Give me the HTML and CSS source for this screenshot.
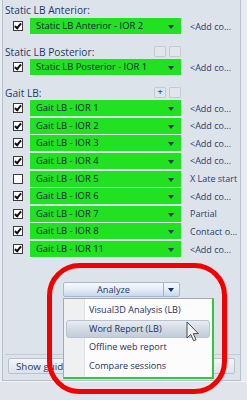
FILE: index.html
```html
<!DOCTYPE html>
<html lang="en">
<head>
  <meta charset="UTF-8">
  <meta name="viewport" content="width=device-width, initial-scale=1.0">
  <title>Session sources</title>
  <link rel="stylesheet" href="styles.css">
</head>
<body>

<div class="window">
  <div class="panel">
    <div class="group-head first"><span>Static LB Anterior:</span></div>
    <div class="row">
      <span class="check on"></span>
      <div class="combo">Static LB Anterior - IOR 2</div>
      <span class="note">&lt;Add co...</span>
    </div>

    <div class="group-head">
      <span>Static LB Posterior:</span>
      <span class="tools"><span class="tool"></span><span class="tool"></span></span>
    </div>
    <div class="row">
      <span class="check on"></span>
      <div class="combo">Static LB Posterior - IOR 1</div>
      <span class="note">&lt;Add co...</span>
    </div>

    <div class="group-head">
      <span>Gait LB:</span>
      <span class="tools"><span class="tool add">+</span><span class="tool"></span></span>
    </div>
    <div class="gait">
      <div class="row"><span class="check on"></span><div class="combo">Gait LB - IOR 1</div><span class="note">&lt;Add co...</span></div>
      <div class="row"><span class="check on"></span><div class="combo">Gait LB - IOR 2</div><span class="note">&lt;Add co...</span></div>
      <div class="row"><span class="check on"></span><div class="combo">Gait LB - IOR 3</div><span class="note">&lt;Add co...</span></div>
      <div class="row"><span class="check on"></span><div class="combo">Gait LB - IOR 4</div><span class="note">&lt;Add co...</span></div>
      <div class="row"><span class="check"></span><div class="combo">Gait LB - IOR 5</div><span class="note">X Late start</span></div>
      <div class="row"><span class="check on"></span><div class="combo">Gait LB - IOR 6</div><span class="note">&lt;Add co...</span></div>
      <div class="row"><span class="check on"></span><div class="combo">Gait LB - IOR 7</div><span class="note">Partial</span></div>
      <div class="row"><span class="check on"></span><div class="combo">Gait LB - IOR 8</div><span class="note">Contact o...</span></div>
      <div class="row"><span class="check on"></span><div class="combo">Gait LB - IOR 11</div><span class="note">&lt;Add co...</span></div>
    </div>

    <div class="analyze-wrap">
      <div class="split-btn">
        <span class="split-main">Analyze</span>
        <span class="split-arrow"></span>
      </div>
    </div>

    <div class="footer">
      <button class="guide-btn">Show guide</button>
    </div>
  </div>
  <div class="status"></div>

  <!-- dropdown of the Analyze button -->
  <ul class="menu">
    <li>Visual3D Analysis (LB)</li>
    <li class="hover">Word Report (LB)</li>
    <li>Offline web report</li>
    <li>Compare sessions</li>
  </ul>

  <svg class="cursor" width="14" height="22" viewBox="0 0 14 22">
    <path d="M1 1 L1 17 L4.8 13.4 L7.6 19.8 L10 18.8 L7.3 12.6 L12.4 12.6 Z" fill="#f4f4f4" stroke="#4a4a4a" stroke-width="1" stroke-linejoin="round"/>
  </svg>

  <svg class="mark" width="247" height="400" viewBox="0 0 247 400">
    <rect x="49.5" y="265.5" width="175" height="126" rx="30" ry="30" fill="none" stroke="#f20000" stroke-width="5"/>
  </svg>
</div>

</body>
</html>
```

FILE: styles.css
```css
body {
  margin: 0;
  background-color: #e6eaf0;
  font-family: 'Open Sans', 'DejaVu Sans', sans-serif;
}

.window {
  position: relative;
  width: 247px;
  height: 400px;
  overflow: hidden;
  background-color: #e8ecf1;
}

.panel {
  box-sizing: border-box;
  margin-left: 2px;
  width: 239px;
  height: 381px;
  padding-left: 2px;
  border: 1px solid #b7c0cc;
  border-top: none;
  background-color: #dde3eb;
  display: flex;
  flex-direction: column;
}

.group-head {
  display: flex;
  align-items: center;
  justify-content: space-between;
  width: 176px;
  height: 15px;
  padding-top: 10px;
  font-size: 10.2px;
  color: #1f3864;
}

.group-head.first {
  padding-top: 2px;
  height: 16px;
}

.tools {
  display: flex;
  gap: 3px;
}

.tool {
  box-sizing: border-box;
  width: 12px;
  height: 11px;
  border: 1px solid #c3cad2;
  border-radius: 1px;
  background-color: #e2e6eb;
  font-size: 9px;
  line-height: 8px;
  text-align: center;
  color: #2f64b4;
  font-weight: bold;
}

.row {
  display: flex;
  align-items: center;
  height: 16px;
  padding-left: 8px;
}

.gait .row {
  margin-bottom: 1.625px;
}

.check {
  box-sizing: border-box;
  width: 10px;
  height: 10px;
  margin-right: 7px;
  border: 1px solid #3b3b3b;
  background-color: #fff;
  position: relative;
}

.check.on::after {
  content: '';
  position: absolute;
  left: 2px;
  top: 0px;
  width: 2px;
  height: 5px;
  border-right: 2px solid #111;
  border-bottom: 2px solid #111;
  transform: rotate(40deg);
}

.combo {
  position: relative;
  box-sizing: border-box;
  width: 151px;
  height: 16px;
  padding-left: 6px;
  background-color: #22e022;
  font-size: 9.4px;
  line-height: 16px;
  color: #15233a;
  white-space: nowrap;
}

.combo::after {
  content: '';
  position: absolute;
  right: 7px;
  top: 7px;
  border-left: 3.5px solid transparent;
  border-right: 3.5px solid transparent;
  border-top: 4px solid #1c2c6a;
}

.note {
  margin-left: 9px;
  font-size: 9px;
  color: #2a3c6c;
  white-space: nowrap;
}

.analyze-wrap {
  margin-top: 23.4px;
  padding-left: 58px;
}

.split-btn {
  box-sizing: border-box;
  display: flex;
  width: 117px;
  height: 15px;
  border: 1px solid #a6b8d0;
  border-radius: 2px;
  background: linear-gradient(#f7fafd, #e3ecf7 50%, #c6d8ee);
}

.split-main {
  flex: 1;
  text-align: center;
  font-size: 9.2px;
  line-height: 13px;
  color: #1f3864;
}

.split-arrow {
  position: relative;
  width: 15px;
  border-left: 1px solid #9fb2cc;
}

.split-arrow::after {
  content: '';
  position: absolute;
  left: 4px;
  top: 5px;
  border-left: 3.5px solid transparent;
  border-right: 3.5px solid transparent;
  border-top: 4px solid #1c2c6a;
}

.footer {
  margin-top: auto;
  padding: 3px 5px 6px 3px;
  border-top: 1px solid #c3cbd5;
}

.guide-btn {
  box-sizing: border-box;
  display: block;
  width: 100%;
  height: 16px;
  padding: 0 0 0 7px;
  border: 1px solid #b8c2ce;
  border-radius: 2px;
  background: linear-gradient(#f3f5f8, #dde3ea);
  font-family: inherit;
  font-size: 9.8px;
  color: #1f3864;
  text-align: left;
}

.status {
  height: 18px;
  border-top: 1px solid #f2f4f7;
  background-color: #e1e5eb;
}

.menu {
  position: absolute;
  left: 63px;
  top: 298px;
  box-sizing: border-box;
  width: 151px;
  height: 81px;
  margin: 0;
  padding: 2px 2px 0 2px;
  list-style: none;
  border: 1px solid #a4aab2;
  border-right: 2px solid #3cc23f;
  border-bottom: 2px solid #3cc23f;
  background: linear-gradient(to right, #eef0f2 0, #eef0f2 20px, #dfe2e6 20px, #dfe2e6 21px, #fcfcfd 21px);
}

.menu li {
  box-sizing: border-box;
  height: 18.7px;
  padding-left: 23px;
  font-size: 9.1px;
  line-height: 18.7px;
  color: #1e2f58;
  white-space: nowrap;
}

.menu li.hover {
  border: 1px solid #b9c2cf;
  border-radius: 3px;
  line-height: 16.7px;
  padding-left: 22px;
  background: linear-gradient(#e9edf3, #cfd7e2 60%, #c3ccd9);
}

.cursor {
  position: absolute;
  left: 186px;
  top: 321px;
}

.mark {
  position: absolute;
  left: 0;
  top: 0;
  pointer-events: none;
}
```
